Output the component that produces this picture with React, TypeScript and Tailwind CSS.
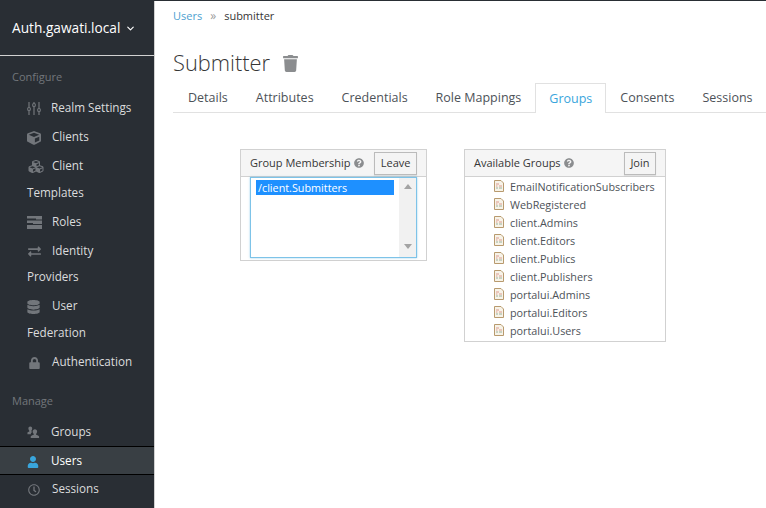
import type { ReactNode } from 'react';
import { FaCube, FaCubes, FaDatabase, FaExchangeAlt, FaLock, FaQuestionCircle, FaRegClock, FaTrash, FaUser } from 'react-icons/fa';
import { ChevronDown } from 'lucide-react';

function UsersIcon({ className }: { className?: string }) {
  return (
    <svg viewBox="0 0 14 14" className={className} fill="currentColor">
      <path d="M3.500 0.500c1.300 0 2.100.9 2.100 2.200 0 .9-.4 1.800-.9 2.300v.9l1 .5-1.500 1.200v1.400H.5V7.200c0-.5 1.300-1 2-1.300V5C2 4.500 1.500 3.600 1.500 2.700 1.500 1.400 2.200.5 3.500.5z" />
      <path d="M8.500 3.500c1.500 0 2.400 1 2.400 2.400 0 1-.4 2-1.100 2.600v1c1.100.4 3.200 1.100 3.200 1.800v1.700H4v-1.700c0-.7 2.200-1.400 3.300-1.800v-1c-.7-.6-1.200-1.600-1.200-2.600 0-1.400.9-2.400 2.400-2.400z" />
    </svg>
  );
}

function SlidersIcon({ className }: { className?: string }) {
  return (
    <svg viewBox="0 0 14 13" className={className} fill="none" stroke="currentColor">
      <path d="M2 0v5M2 9v4M7 0v1M7 5v8M12 0v6M12 10v3" strokeWidth="1.200" />
      <rect x="0.700" y="5.500" width="2.600" height="3" rx="1" strokeWidth="1.100" />
      <rect x="5.700" y="1.500" width="2.600" height="3" rx="1" strokeWidth="1.100" />
      <rect x="10.700" y="6.500" width="2.600" height="3" rx="1" strokeWidth="1.100" />
    </svg>
  );
}

function RolesIcon({ className }: { className?: string }) {
  return (
    <svg viewBox="0 0 15 13" className={className} fill="currentColor">
      <path d="M0 0h15v3.500H9v-1H0zM0 4.500h15v3.500H6v-1H0zM0 9h15v4H0z" />
    </svg>
  );
}

function FileIcon() {
  return (
    <svg viewBox="0 0 10 12" className="w-[10px] h-[12px] shrink-0 -mt-[2px]">
      <path d="M.5.5h6.500l2.500 2.500v8.500h-9z" fill="#f7f3e8" stroke="#b89a6e" />
      <path d="M2 4h3M2 6h1.500M5 6h3" stroke="#dd9a90" />
      <path d="M2 8h2M5 8h3" stroke="#9ab29c" />
    </svg>
  );
}

const configure = [
  { icon: <SlidersIcon className="w-[14px] h-[13px]" />, label: 'Realm Settings', gap: 'w-[24px]' },
  { icon: <FaCube className="w-[14px] h-[14px]" />, label: 'Clients', gap: 'w-[25px]' },
  { icon: <FaCubes className="w-[18px] h-[15px]" />, label: 'Client Templates', gap: 'w-[25px]' },
  { icon: <RolesIcon className="w-[15px] h-[13px]" />, label: 'Roles', gap: 'w-[25px]' },
  { icon: <FaExchangeAlt className="w-[15px] h-[13px]" />, label: 'Identity Providers', gap: 'w-[25px]' },
  { icon: <FaDatabase className="w-[13px] h-[14px]" />, label: 'User Federation', gap: 'w-[25px]' },
  { icon: <FaLock className="w-[11px] h-[12px] ml-[2px]" />, label: 'Authentication', gap: 'w-[25px]' },
];

const groups = [
  'EmailNotificationSubscribers',
  'WebRegistered',
  'client.Admins',
  'client.Editors',
  'client.Publics',
  'client.Publishers',
  'portalui.Admins',
  'portalui.Editors',
  'portalui.Users',
];

const tabs = ['Details', 'Attributes', 'Credentials', 'Role Mappings', 'Groups', 'Consents', 'Sessions'];

function NavItem({ icon, label, gap, active }: { icon: ReactNode; label: string; gap: string; active?: boolean }) {
  return (
    <div
      className={
        active
          ? 'pl-[27px] pr-[19px] py-px leading-[25px] bg-[#393f44] border-y border-black text-white'
          : 'pl-[27px] pr-[19px] py-px leading-[26.900px] text-[#dbdcdd]'
      }
    >
      <span className={`inline-flex items-center align-middle ${gap} ${active ? 'text-[#39a5dc]' : 'text-[#72767b]'}`}>{icon}</span>
      {label}
    </div>
  );
}

function PanelHeader({ title, button }: { title: string; button: string }) {
  return (
    <div className="h-[27px] flex items-center justify-between pl-[9px] pr-[9px] bg-[#f5f5f5] border-b border-[#d1d1d1]">
      <div className="flex items-center gap-[3px] font-medium text-[#363636] text-[11px]">
        {title}
        <FaQuestionCircle className="w-[10px] h-[10px] text-[#8b8d8f]" />
      </div>
      <button className="h-[23px] px-[5.500px] border border-[#bbb] bg-[#f4f4f4] text-[11px] font-medium text-[#363636] shadow-[0_1px_1px_rgba(0,0,0,0.08)]">
        {button}
      </button>
    </div>
  );
}

export default function App() {
  return (
    <div className="w-[766px] h-[508px] overflow-hidden flex border-t border-[#292e34] bg-white font-['Open_Sans',sans-serif] text-[#363636]">
      <aside className="w-[155px] shrink-0 bg-[#292e34] border-r border-[#d1d1d1] text-[11.700px]">
        <div className="h-[55px] flex items-center gap-[5px] pl-[12px] text-[13.700px] text-white border-b border-[#d1d1d1]">
          Auth.gawati.local
          <ChevronDown className="w-[11px] h-[11px]" strokeWidth={2.5} />
        </div>
        <div className="mt-[13px] pl-[12px] h-[16px] leading-[16px] text-[11px] text-[#72767b]">Configure</div>
        <div className="mt-[8px]">
          {configure.map((item) => (
            <NavItem key={item.label} icon={item.icon} label={item.label} gap={item.gap} />
          ))}
        </div>
        <div className="mt-[17px] pl-[12px] h-[16px] leading-[16px] text-[11px] text-[#72767b]">Manage</div>
        <div className="mt-[8px]">
          <NavItem icon={<UsersIcon className="w-[13px] h-[13px]" />} label="Groups" gap="w-[24px]" />
          <NavItem icon={<FaUser className="w-[12px] h-[12px]" />} label="Users" gap="w-[24px]" active />
          <div className="-mt-px">
            <NavItem icon={<FaRegClock className="w-[12px] h-[12px] ml-[1px]" />} label="Sessions" gap="w-[25px]" />
          </div>
        </div>
      </aside>

      <main className="flex-1 min-w-0 pl-[18px]">
        <div className="mt-[7px] h-[16px] flex items-center text-[11px]">
          <span className="text-[#4e9fcf]">Users</span>
          <span className="mx-[8px] text-[#9c9c9c] text-[12px] leading-none">»</span>
          <span>submitter</span>
        </div>
        <div className="mt-[24px] flex items-center gap-[13px]">
          <h1 className="text-[21.800px] font-light leading-[30px]">Submitter</h1>
          <FaTrash className="w-[15px] h-[17px] text-[#8b8d8f]" />
        </div>
        <div className="mt-[5px] h-[30px] flex whitespace-nowrap border-b border-[#e1e1e1] pl-px text-[12.500px] text-[#4d5258]">
          {tabs.map((tab) =>
            tab === 'Groups' ? (
              <div key={tab} className="h-[30px] px-[13px] leading-[29px] text-[#39a5dc] bg-white border border-b-0 border-[#e1e1e1]">
                {tab}
              </div>
            ) : (
              <div key={tab} className="h-[29px] px-[14px] leading-[29px]">
                {tab}
              </div>
            )
          )}
        </div>

        <div className="mt-[36px] ml-[67px] flex items-start gap-[37px]">
          <section className="w-[187px] border border-[#d1d1d1]">
            <PanelHeader title="Group Membership" button="Leave" />
            <div className="mx-[9px] mb-[2px] h-[81px] flex border border-[#7dc3e8] shadow-[0_0_2px_rgba(57,165,220,0.5)] text-[10.800px]">
              <div className="flex-1 px-[5px] pt-[2px]">
                <div className="h-[15px] leading-[15px] px-[2px] bg-[#1e90ff] text-white">/client.Submitters</div>
              </div>
              <div className="w-[17px] bg-[#f1f1f1] flex flex-col items-center justify-between pt-[6px] pb-[8px]">
                <div className="w-0 h-0 border-x-[4px] border-x-transparent border-b-[5px] border-b-[#a3a3a3]" />
                <div className="w-0 h-0 border-x-[4px] border-x-transparent border-t-[5px] border-t-[#a3a3a3]" />
              </div>
            </div>
          </section>

          <section className="w-[202px] border border-[#d1d1d1]">
            <PanelHeader title="Available Groups" button="Join" />
            <ul className="pl-[29px] pt-px pb-px text-[10.800px] text-[#4d5258]">
              {groups.map((g) => (
                <li key={g} className="h-[18px] flex items-center gap-[6px] leading-[18px] whitespace-nowrap">
                  <FileIcon />
                  {g}
                </li>
              ))}
            </ul>
          </section>
        </div>
      </main>
    </div>
  );
}
